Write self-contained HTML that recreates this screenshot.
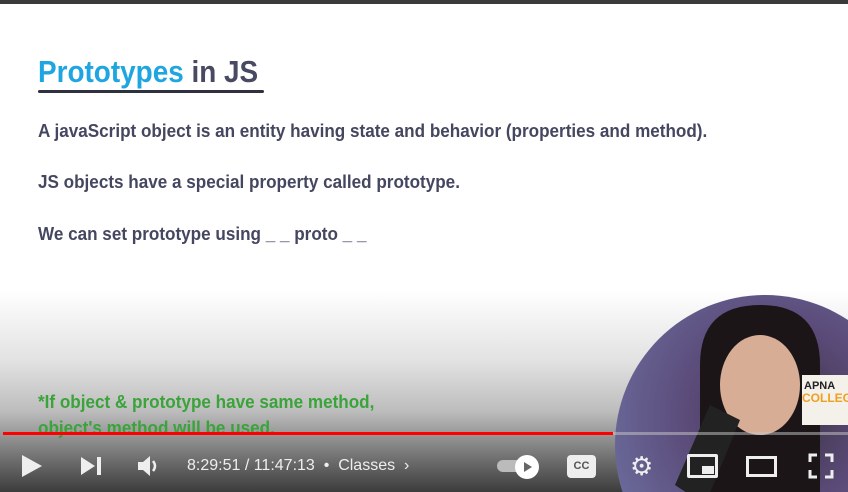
<!DOCTYPE html>
<html style="width:848px;height:492px;overflow:hidden"><head><style>
*{margin:0;padding:0;box-sizing:border-box}
body{width:848px;height:492px;overflow:hidden;position:relative;background:#fff;font-family:"Liberation Sans",sans-serif}
.top{position:absolute;left:0;top:0;width:848px;height:4px;background:#3a3a3a}
.t{position:absolute;white-space:nowrap;font-weight:bold;transform-origin:0 0;transform:scaleX(0.95)}
.grad{position:absolute;left:0;top:290px;width:848px;height:202px;background:linear-gradient(#fff 0%,#e2e2e2 35%,#bdbdbd 60%,#6b6b6b 85%,#3c3c3c 100%)}
svg{position:absolute}
.w{color:#eee;font-size:16px;position:absolute;line-height:18px}
.bar{position:absolute;top:432px;height:3px}
</style></head><body>
<div class="top"></div>
<div class="t" style="left:38px;top:54px;font-size:31px;color:#484a62;transform:scaleX(0.9)"><span style="color:#1fa6e0">Prototypes</span> in JS</div>
<div style="position:absolute;left:38px;top:90px;width:226px;height:3px;background:#2f3040;border-radius:2px"></div>
<div class="t" style="left:38px;top:121px;font-size:18px;color:#454760">A javaScript object is an entity having state and behavior (properties and method).</div>
<div class="t" style="left:38px;top:172px;font-size:18px;color:#454760">JS objects have a special property called prototype.</div>
<div class="t" style="left:38px;top:224px;font-size:18px;color:#454760">We can set prototype using _ _ proto _ _</div>
<div class="grad"></div>
<div class="t" style="left:38px;top:392px;font-size:18px;color:#3aa33a">*If object &amp; prototype have same method,</div>
<div class="t" style="left:38px;top:418px;font-size:18px;color:#3aa33a">object's method will be used.</div>
<svg style="left:615px;top:295px" width="233" height="197" viewBox="0 0 233 197">
 <defs>
  <clipPath id="c"><circle cx="150" cy="150" r="150"/></clipPath>
  <radialGradient id="g" cx="0.55" cy="0.4" r="0.6"><stop offset="0" stop-color="#3a3340"/><stop offset="0.5" stop-color="#5a4a78"/><stop offset="1" stop-color="#6a6a9a"/></radialGradient>
 </defs>
 <g clip-path="url(#c)">
  <rect width="300" height="300" fill="url(#g)"/>
  <path d="M85 70 Q85 10 145 10 Q205 10 205 70 V300 H85Z" fill="#1b1518"/>
  <ellipse cx="145" cy="90" rx="40" ry="50" fill="#d8ad95"/>
  <path d="M60 190 L95 110 L125 125 L90 210Z" fill="#222"/>
  <rect x="187" y="80" width="46" height="50" fill="#f4f0ea"/>
  <text x="189" y="94" font-family="Liberation Sans" font-weight="bold" font-size="11" fill="#222">APNA</text>
  <text x="187" y="107" font-family="Liberation Sans" font-weight="bold" font-size="12" fill="#f0a020">COLLEGE</text>
 </g>
</svg>
<div class="bar" style="left:3px;width:845px;background:rgba(200,200,200,.5)"></div>
<div class="bar" style="left:3px;width:610px;background:#f00"></div>
<svg style="left:20px;top:453px" width="24" height="26"><path d="M2 2 L22 13 L2 24Z" fill="#eee"/></svg>
<svg style="left:79px;top:455px" width="24" height="22"><path d="M2 2 L16 11 L2 20Z" fill="#eee"/><rect x="18" y="2" width="4" height="18" fill="#eee"/></svg>
<svg style="left:136px;top:454px" width="26" height="24"><path d="M2 8 H7 L14 2 V22 L7 16 H2Z" fill="#eee"/><path d="M17 7 Q21 12 17 17" stroke="#eee" stroke-width="2.5" fill="none"/></svg>
<div class="w" style="left:187px;top:457px">8:29:51 / 11:47:13 &nbsp;•&nbsp; Classes &nbsp;›</div>
<div style="position:absolute;left:497px;top:460px;width:30px;height:12px;border-radius:6px;background:#bbb"></div>
<div style="position:absolute;left:515px;top:455px;width:24px;height:24px;border-radius:50%;background:#fff"></div>
<svg style="left:523px;top:461px" width="10" height="12"><path d="M1 1 L9 6 L1 11Z" fill="#666"/></svg>
<div style="position:absolute;left:567px;top:455px;width:29px;height:23px;border-radius:4px;background:#eee;font:bold 11px 'Liberation Sans',sans-serif;color:#555;text-align:center;line-height:23px">CC</div>
<div style="position:absolute;left:630px;top:454px;font-size:26px;color:#eee;line-height:24px;height:24px;overflow:hidden">⚙</div>
<div style="position:absolute;left:687px;top:454px;width:31px;height:24px;border:3px solid #eee;border-radius:2px"></div>
<div style="position:absolute;left:702px;top:466px;width:12px;height:8px;background:#eee"></div>
<div style="position:absolute;left:746px;top:456px;width:31px;height:21px;border:3px solid #eee"></div>
<svg style="left:808px;top:453px" width="26" height="26"><path d="M2 9V2H9 M17 2H24V9 M24 17V24H17 M9 24H2V17" stroke="#eee" stroke-width="3" fill="none"/></svg>
</body></html>
